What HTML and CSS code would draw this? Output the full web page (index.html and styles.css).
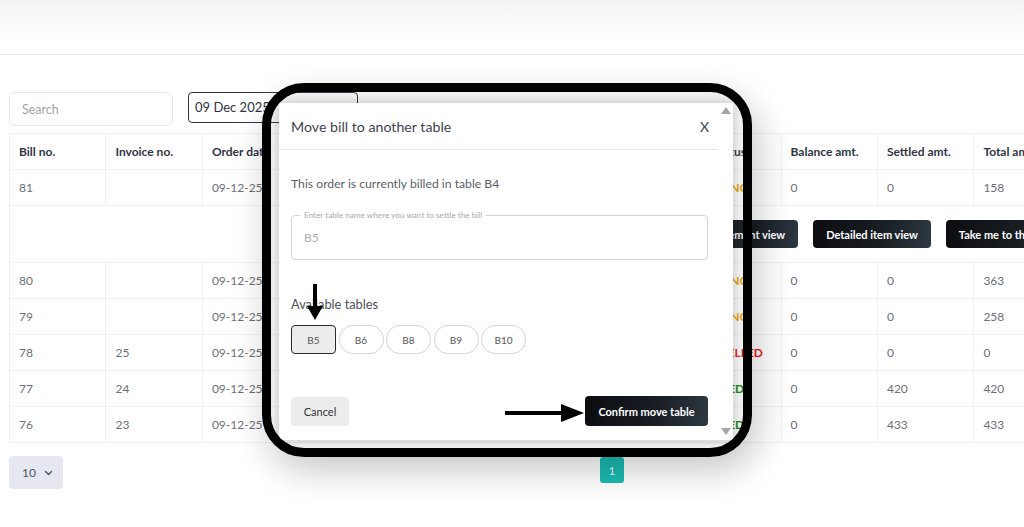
FILE: index.html
```html
<!DOCTYPE html>
<html lang="en">
<head>
<meta charset="utf-8">
<title>Bills</title>
<link rel="stylesheet" href="styles.css">
</head>
<body>
<div class="page">
  <header class="topbar"></header>
  <main class="content">
    <div class="toolbar">
      <input class="search" type="text" placeholder="Search">
      <div class="date-input">09 Dec 2025</div>
    </div>
    <table class="bills">
      <colgroup>
        <col><col><col><col><col><col><col><col><col><col><col>
      </colgroup>
      <thead>
        <tr>
          <th>Bill no.</th><th>Invoice no.</th><th>Order date</th><th>Table</th><th>Customer</th><th>Order type</th><th>Payment mode</th><th>Bill status</th><th>Balance amt.</th><th>Settled amt.</th><th>Total amt.</th>
        </tr>
      </thead>
      <tbody>
        <tr>
          <td>81</td><td></td><td>09-12-25</td><td>B4</td><td></td><td>Dine in</td><td></td><td class="st pending">PENDING</td><td>0</td><td>0</td><td>158</td>
        </tr>
        <tr class="expanded">
          <td colspan="11">
            <div class="actions">
              <button class="dark-btn">Settlement view</button>
              <button class="dark-btn">Detailed item view</button>
              <button class="dark-btn">Take me to the table</button>
            </div>
          </td>
        </tr>
        <tr>
          <td>80</td><td></td><td>09-12-25</td><td>B2</td><td></td><td>Dine in</td><td></td><td class="st pending">PENDING</td><td>0</td><td>0</td><td>363</td>
        </tr>
        <tr>
          <td>79</td><td></td><td>09-12-25</td><td>B1</td><td></td><td>Dine in</td><td></td><td class="st pending">PENDING</td><td>0</td><td>0</td><td>258</td>
        </tr>
        <tr>
          <td>78</td><td>25</td><td>09-12-25</td><td>B3</td><td></td><td>Dine in</td><td></td><td class="st cancelled">CANCELLED</td><td>0</td><td>0</td><td>0</td>
        </tr>
        <tr>
          <td>77</td><td>24</td><td>09-12-25</td><td>B6</td><td></td><td>Dine in</td><td>Cash</td><td class="st settled">SETTLED</td><td>0</td><td>420</td><td>420</td>
        </tr>
        <tr>
          <td>76</td><td>23</td><td>09-12-25</td><td>B5</td><td></td><td>Dine in</td><td>Cash</td><td class="st settled">SETTLED</td><td>0</td><td>433</td><td>433</td>
        </tr>
      </tbody>
    </table>
    <div class="footer">
      <div class="per-page">10
        <svg class="chev" width="9" height="6" viewBox="0 0 9 6"><path d="M1.5 1.5 L4.5 4.5 L7.5 1.5" fill="none" stroke="#4b5563" stroke-width="1.4" stroke-linecap="round" stroke-linejoin="round"/></svg>
      </div>
      <div class="pager"><span class="page-btn">1</span></div>
    </div>
  </main>

  <div class="annotation">
    <div class="modal">
      <div class="modal-main">
        <div class="modal-head">
          <span class="modal-title">Move bill to another table</span>
          <span class="close">X</span>
        </div>
        <div class="modal-body">
          <p class="current">This order is currently billed in table B4</p>
          <div class="field">
            <span class="field-label">Enter table name where you want to settle the bill</span>
            <span class="field-value">B5</span>
          </div>
          <p class="avail">Available tables</p>
          <div class="chips">
            <span class="chip selected">B5</span>
            <span class="chip">B6</span>
            <span class="chip">B8</span>
            <span class="chip">B9</span>
            <span class="chip">B10</span>
          </div>
          <div class="modal-actions">
            <button class="cancel-btn">Cancel</button>
            <button class="dark-btn confirm">Confirm move table</button>
          </div>
        </div>
      </div>
      <div class="scrollbar">
        <svg width="10" height="7" viewBox="0 0 10 7"><path d="M5 0 L10 7 L0 7 Z" fill="#a3a3a3"/></svg>
        <svg width="10" height="7" viewBox="0 0 10 7"><path d="M0 0 L10 0 L5 7 Z" fill="#a3a3a3"/></svg>
      </div>
    </div>
    <svg class="arrow-down" width="18" height="37" viewBox="0 0 18 37"><path d="M7 0 H11 V22 H17 L9 36 L1 22 H7 Z" fill="#000"/></svg>
    <svg class="arrow-right" width="80" height="20" viewBox="0 0 80 20"><path d="M0 8 H56 V1 L79 10 L56 19 V12 H0 Z" fill="#000"/></svg>
  </div>
</div>
</body>
</html>
```
FILE: styles.css
```css
* { box-sizing: border-box; }
html, body { margin: 0; padding: 0; }
body {
  width: 1024px;
  height: 527px;
  overflow: hidden;
  background: #fff;
  font-family: "Lato", "Noto Sans", sans-serif;
  color: #374151;
}
.page { position: relative; width: 1024px; height: 527px; overflow: hidden; }

.topbar {
  height: 55px;
  border-bottom: 1px solid #e5e7eb;
  background: linear-gradient(#f3f3f4 0%, #fafafa 40%, #ffffff 75%);
}

.content { padding: 37px 0 0 9px; }

.toolbar { display: flex; align-items: flex-start; gap: 15px; }
.search {
  width: 164px; height: 34px;
  border: 1px solid #e5e7eb; border-radius: 6px;
  padding: 0 12px; font: inherit; font-size: 12.5px; color: #374151;
  outline: none;
}
.search::placeholder { color: #a0a4ab; }
.date-input {
  width: 170px; height: 31px;
  border: 1.5px solid #2f3442; border-radius: 4px;
  padding: 0 6px; font-size: 13px; line-height: 28px; color: #2f3442;
}

.bills {
  margin-top: 7px;
  table-layout: fixed;
  border-collapse: collapse;
  width: 1061px;
  font-size: 12px;
}
.bills col { width: 96.45px; }
.bills th, .bills td {
  border: 1px solid #eef0f4;
  text-align: left;
  padding: 0 10px 0 9px;
  white-space: nowrap;
  overflow: hidden;
}
.bills th { height: 36px; font-weight: 700; color: #2f3542; }
.bills td { height: 36px; color: #6b7078; }
.bills tr.expanded td { height: 57px; padding: 0; }
.st { font-weight: 700; }
.st.pending { color: #f0a000; }
.st.cancelled { color: #f01818; }
.st.settled { color: #138a13; }

.actions { display: flex; gap: 15px; padding-left: 683px; }
.dark-btn {
  height: 28px; padding: 0 13px;
  border: none; border-radius: 4px;
  background: linear-gradient(100deg, #0b0d10 0%, #1a1f25 60%, #2e3943 100%);
  color: #fff; font: inherit; font-size: 11px; font-weight: 700;
  white-space: nowrap;
}

.footer { display: flex; align-items: flex-start; margin-top: 13px; }
.per-page {
  width: 54px; height: 33px;
  background: #e6e8f1; border-radius: 4px;
  display: flex; align-items: center; gap: 8px;
  padding-left: 13px; font-size: 12px; color: #4b5563;
}
.pager { margin-left: 537px; padding-top: 1px; }
.page-btn {
  display: flex; align-items: center; justify-content: center;
  width: 24px; height: 26px; border-radius: 3px;
  background: #1bbcb3; color: #e8fffd; font-size: 11px;
}

/* annotation overlay */
.annotation {
  position: absolute;
  left: 262px; top: 83px;
  width: 490px; height: 374px;
  border: 9px solid #000;
  border-radius: 42px;
  background: rgba(120, 120, 120, 0.1);
  overflow: hidden;
  box-shadow: 6px 14px 36px rgba(0, 0, 0, 0.22);
}
.modal {
  position: absolute;
  left: 8px; top: 11px;
  width: 454px; height: 337px;
  background: #fff;
  display: flex;
  box-shadow: 0 0 10px rgba(0, 0, 0, 0.2);
}
.modal-main { width: 439px; }
.modal-head {
  height: 47px;
  border-bottom: 1px solid #e6e6e6;
  display: flex; align-items: center; justify-content: space-between;
  padding: 0 9px 0 12px;
}
.modal-title { font-size: 14.2px; color: #3f4450; }
.close { font-size: 14px; color: #3f4450; }
.modal-body { padding: 0 10px 0 12px; }
.current { margin: 26px 0 0; font-size: 12.2px; line-height: 16px; color: #5a5f69; }
.field {
  position: relative;
  margin-top: 23px;
  height: 45px;
  border: 1px solid #d4d4d4; border-radius: 4px;
  display: flex; align-items: center;
  padding-left: 12px;
}
.field-label {
  position: absolute; left: 8px; top: -6px;
  background: #fff; padding: 0 4px;
  font-size: 8.2px; line-height: 10px; color: #a8a8a8;
}
.field-value { font-size: 12px; color: #b0b0b0; }
.avail { margin: 36px 0 0; font-size: 12.8px; line-height: 16px; color: #4a4f5a; }
.chips { display: flex; gap: 2.5px; margin-top: 13px; }
.chip {
  width: 45px; height: 29px;
  border: 1px solid #d6d6d6; border-radius: 14px;
  display: flex; align-items: center; justify-content: center;
  font-size: 10px; color: #555;
  background: #fff;
}
.chip.selected {
  border: 1.5px solid #2a2a2a; border-radius: 4px;
  background: #ececec;
}
.modal-actions {
  display: flex; justify-content: space-between; align-items: center;
  margin-top: 42px;
}
.cancel-btn {
  width: 58px; height: 29px;
  border: none; border-radius: 4px; background: #ececec;
  font: inherit; font-size: 11px; color: #333;
}
.confirm { width: 123px; height: 30px; }
.scrollbar {
  width: 15px;
  display: flex; flex-direction: column; justify-content: space-between; align-items: center;
  padding: 4px 0 5px;
}
.arrow-down { position: absolute; left: 35px; top: 192px; }
.arrow-right { position: absolute; left: 234px; top: 311px; }
```
